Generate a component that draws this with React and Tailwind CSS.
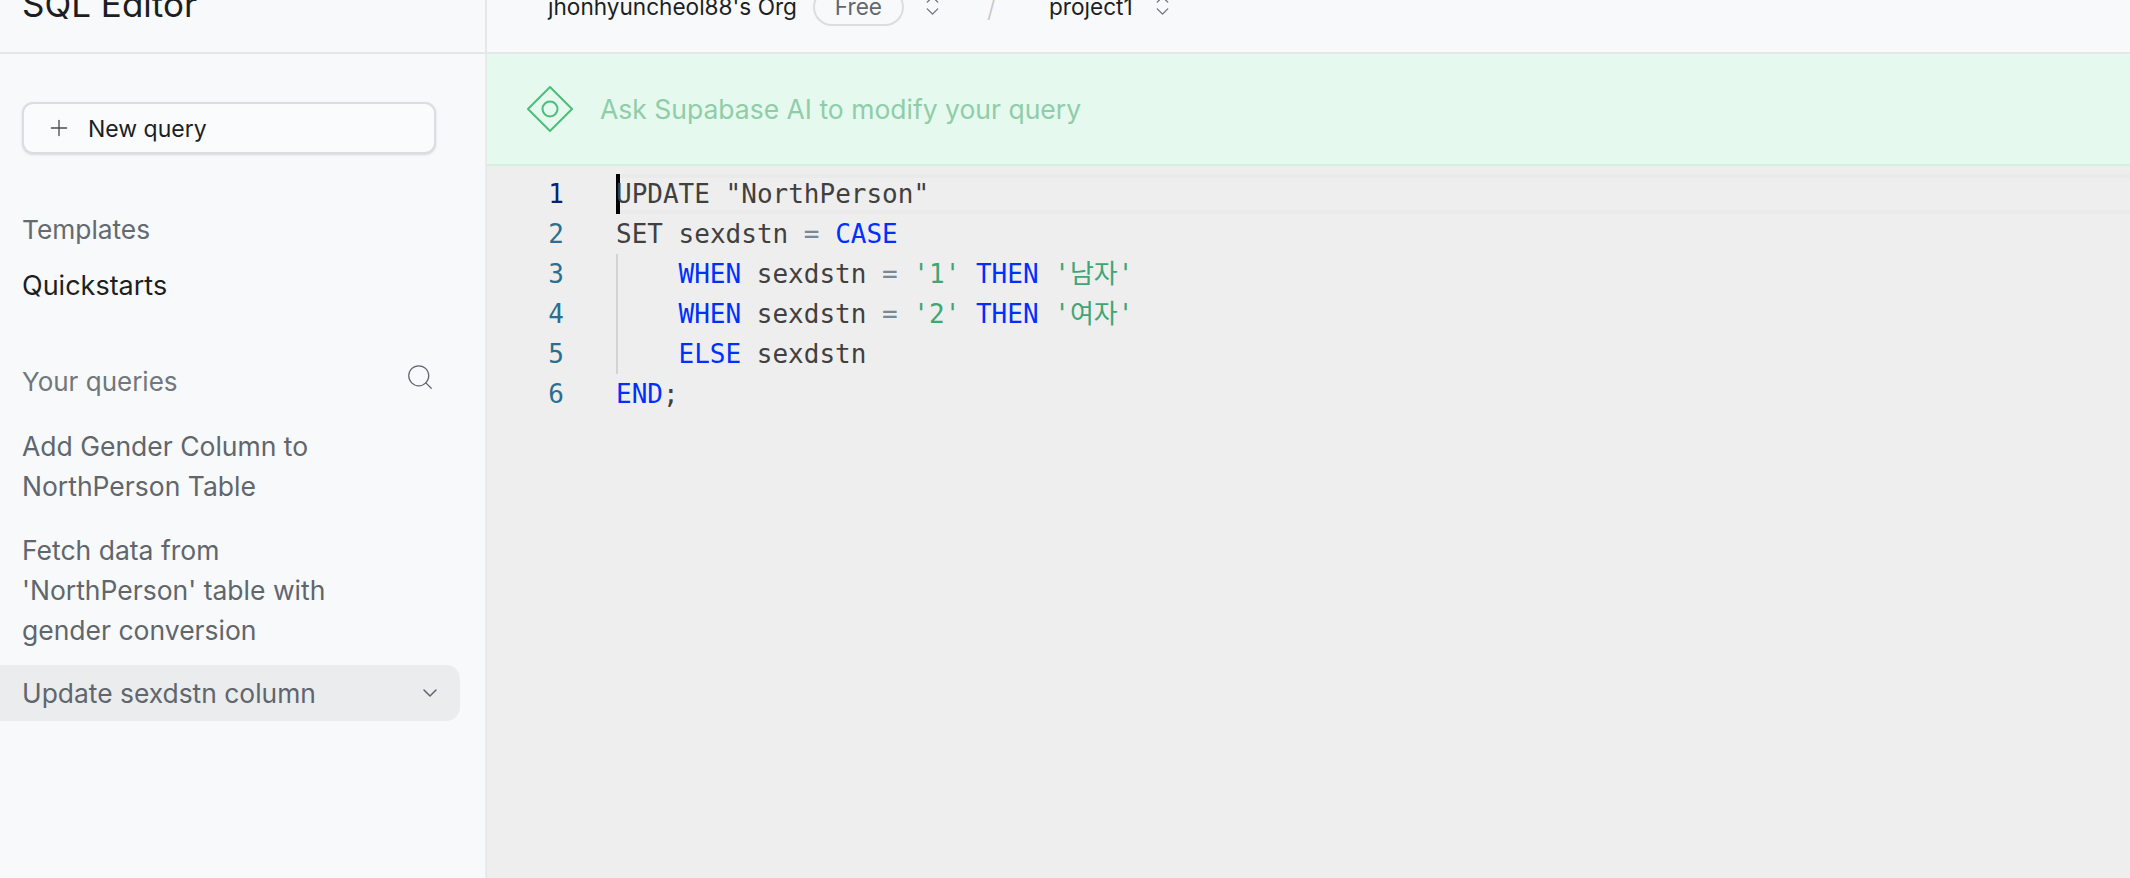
import { ChevronDown, ChevronUp, Plus, Search } from "lucide-react";

const queries = [
  ["Add Gender Column to", "NorthPerson Table"],
  ["Fetch data from", "'NorthPerson' table with", "gender conversion"],
];

function Kw({ children }) {
  return <span className="text-[#0030ff]">{children}</span>;
}

function Str({ children }) {
  return <span className="text-[#40a574]">{children}</span>;
}

function Op({ children }) {
  return <span className="text-[#778899]">{children}</span>;
}

function Line({ children }) {
  return <div className="h-10 whitespace-pre leading-10">{children}</div>;
}

function Switcher() {
  return (
    <div className="flex flex-col items-center -space-y-[9px] text-[#6b7177]">
      <ChevronUp size={21} strokeWidth={1.5} />
      <ChevronDown size={21} strokeWidth={1.5} />
    </div>
  );
}

export default function App() {
  return (
    <div className="flex h-[878px] w-[2130px] flex-col overflow-hidden bg-[#f8f9fb] font-['Inter',sans-serif] text-[#1c1f22]">
      <header className="flex h-[54px] shrink-0 border-b-2 border-[#e6e7e9]">
        <div className="flex w-[487px] shrink-0 items-end border-r-2 border-[#e6e7e9] pb-[30px] pl-[22px]">
          <h1 className="text-[35px] leading-none">SQL Editor</h1>
        </div>
        <div className="flex items-end pb-[33px] pl-[61px] text-[22.6px] leading-none">
          <span>jhonhyuncheol88's Org</span>
          <span className="ml-[16px] -mb-[7px] flex h-[38px] w-[91px] shrink-0 items-center justify-center rounded-full border-2 border-[#dcdddf] text-[#60676d]">
            Free
          </span>
          <div className="ml-[18px] -mb-[3px]">
            <Switcher />
          </div>
          <span className="ml-[44px] -mb-[2px] text-[26px] font-light text-[#c4c7ca]">/</span>
          <span className="ml-[53px]">project1</span>
          <div className="ml-[19px] -mb-[3px]">
            <Switcher />
          </div>
        </div>
      </header>

      <div className="flex min-h-0 flex-1">
        <aside className="w-[487px] shrink-0 border-r-2 border-[#e9eaec] pt-[48px]">
          <button
            type="button"
            className="ml-[22px] flex h-[52px] w-[414px] items-center rounded-[11px] border-2 border-[#dcdde0] bg-[#fafbfd] pl-[22px] text-[23px] text-[#1c1f22] shadow-sm"
          >
            <Plus size={26} strokeWidth={1.25} className="text-[#4a4f54]" />
            <span className="ml-[16px] pt-[2px]">New query</span>
          </button>

          <nav className="mt-[56px] pl-[22px] leading-10">
            <p className="text-[26.3px] text-[#636a70]">Templates</p>
            <p className="mt-4 text-[27px] text-[#1c1f22]">Quickstarts</p>
          </nav>

          <div className="mt-[56px] flex items-center justify-between pl-[22px] pr-[50px]">
            <span className="text-[26px] leading-10 text-[#70777d]">Your queries</span>
            <Search size={30} strokeWidth={1} className="-mt-[10px] text-[#5f666b]" />
          </div>

          <div className="mt-[24px] space-y-6 pl-[22px] text-[26.5px] leading-10 text-[#5f666c]">
            {queries.map((lines) => (
              <p key={lines[0]}>
                {lines.map((text) => (
                  <span key={text} className="block">
                    {text}
                  </span>
                ))}
              </p>
            ))}
          </div>

          <div className="mt-[15px] flex h-14 w-[460px] items-center justify-between rounded-r-[14px] bg-[#ebecee] pl-[22px] pr-[18px] text-[26.4px] text-[#5f666c]">
            <span className="pt-[2px]">Update sexdstn column</span>
            <ChevronDown size={24} strokeWidth={1.5} />
          </div>
        </aside>

        <main className="flex min-w-0 flex-1 flex-col bg-[#eeeeee]">
          <div className="flex h-[112px] shrink-0 items-center border-b-2 border-[#d2f2df] bg-[#e5f9ef] pl-[40px]">
            <svg width="46" height="46" viewBox="0 0 46 46" fill="none" stroke="#4dbd7c" strokeWidth="2">
              <path d="M23 1 45 23 23 45 1 23Z" />
              <circle cx="23" cy="23" r="7.5" />
            </svg>
            <span className="ml-[27px] pt-[2px] text-[26.5px] text-[#8fcda8]">Ask Supabase AI to modify your query</span>
          </div>

          <div className="relative flex pt-[8px] font-['DejaVu_Sans_Mono','Noto_Sans_CJK_KR',monospace] text-[26px] text-[#404040]">
            <div className="absolute left-[129px] right-0 top-[8px] h-10 border-y-4 border-[#eaeaea]" />
            <div className="absolute left-[129px] top-[8px] h-10 w-1 bg-black" />
            <div className="w-[77px] shrink-0 text-right leading-10 text-[#2b6f8e]">
              <div className="text-[#0b216f]">1</div>
              <div>2</div>
              <div>3</div>
              <div>4</div>
              <div>5</div>
              <div>6</div>
            </div>
            <div className="relative ml-[52px]">
              <Line>UPDATE "NorthPerson"</Line>
              <Line>
                SET sexdstn <Op>=</Op> <Kw>CASE</Kw>
              </Line>
              <div className="border-l-2 border-[#d3d3d3] pl-[60.5px]">
                <Line>
                  <Kw>WHEN</Kw> sexdstn <Op>=</Op> <Str>'1'</Str> <Kw>THEN</Kw> <Str>'남자'</Str>
                </Line>
                <Line>
                  <Kw>WHEN</Kw> sexdstn <Op>=</Op> <Str>'2'</Str> <Kw>THEN</Kw> <Str>'여자'</Str>
                </Line>
                <Line>
                  <Kw>ELSE</Kw> sexdstn
                </Line>
              </div>
              <Line>
                <Kw>END</Kw>;
              </Line>
            </div>
          </div>
        </main>
      </div>
    </div>
  );
}
